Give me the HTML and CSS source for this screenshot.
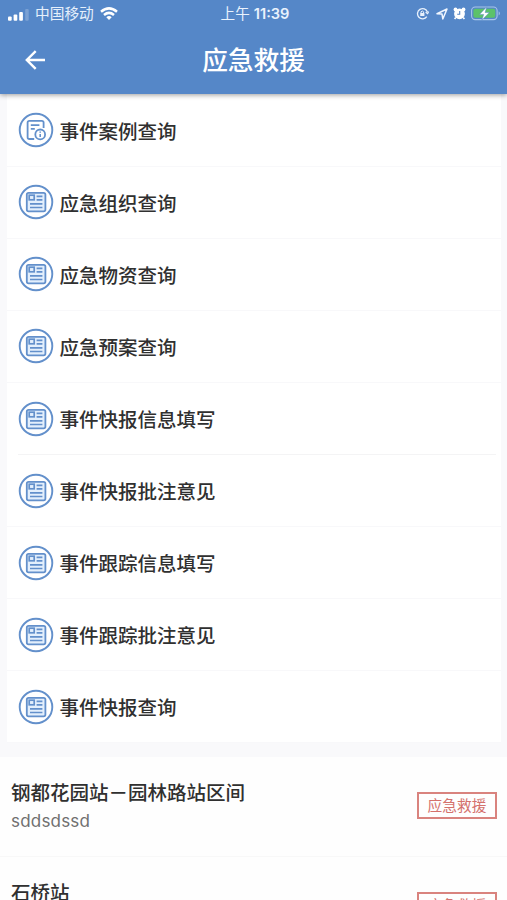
FILE: index.html
```html
<!DOCTYPE html>
<html lang="zh-CN">
<head>
<meta charset="utf-8">
<title>应急救援</title>
<link rel="stylesheet" href="styles.css">
</head>
<body>
<svg class="defs" aria-hidden="true">
  <symbol id="news" viewBox="0 0 36 36">
    <circle cx="18" cy="18" r="16.3" stroke-width="1.9"/>
    <rect x="8.8" y="8.8" width="18.6" height="18.6" rx="1.8" fill="#e3effc" stroke-width="1.8"/>
    <rect x="11.2" y="11.2" width="5" height="4.6" stroke-width="1.7"/>
    <path d="M18.6 12.4h5.8M18.6 15.9h5.8M12 19.8h12.4M12 23.5h12.4" stroke-width="1.7"/>
  </symbol>
  <symbol id="case" viewBox="0 0 36 36">
    <circle cx="18" cy="18" r="16.3" stroke-width="1.9"/>
    <path d="M25.6 16v-5.4q0-1.8-1.8-1.8H11.4q-1.8 0-1.8 1.8v14.6q0 1.8 1.8 1.8h4.8M12.8 13.2h8.6M12.8 16.8h4" stroke-width="1.8"/>
    <circle cx="22.2" cy="22.4" r="4.9" stroke-width="1.8"/>
    <path d="M22.2 22v3M22.2 19.6v1.2" stroke-width="1.6"/>
  </symbol>
</svg>
<header class="header">
  <div class="status">
    <div class="status-left">
      <svg class="signal" viewBox="0 0 22 12"><g fill="#fff"><rect x="0" y="7.5" width="3.7" height="4.2" rx="1"/><rect x="5.6" y="5.6" width="3.7" height="6.1" rx="1"/><rect x="11.2" y="3" width="3.7" height="8.7" rx="1"/><rect x="17.2" y="0" width="3.5" height="11.7" rx="1" opacity=".22"/></g></svg>
      <span class="carrier">中国移动</span>
      <svg class="wifi" viewBox="0 0 18 13" fill="none" stroke="#fff" stroke-width="2.5"><path d="M1 4.8Q9-2 17 4.8M4 8Q9 3.8 14 8"/><path d="M6.3 10.2Q9 8 11.7 10.2L9 13z" fill="#fff" stroke="none"/></svg>
    </div>
    <div class="clock">上午 <b>11:39</b></div>
    <div class="status-right">
      <svg class="lock" viewBox="0 0 13 13" fill="none" stroke="#e8f1fc" stroke-width="1.3"><path d="M10.8 9.6A5.1 5.1 0 1 1 11.4 5M9.6 5.2l2 1.3 1.1-2"/><rect x="4.2" y="6" width="4.2" height="3" fill="#e8f1fc" stroke="none"/><path d="M5 6V4.8q1.3-1.6 2.6 0V6" stroke-width="1"/></svg>
      <svg class="arrow" viewBox="0 0 12 12" fill="none" stroke="#f0f6ff" stroke-width="1.5" stroke-linejoin="round"><path d="M1 5.8L11 1 6.8 11 6 6z"/></svg>
      <svg class="alarm" viewBox="0 0 13 13"><circle cx="2.5" cy="2.5" r="1.9" fill="#fff"/><circle cx="10.5" cy="2.5" r="1.9" fill="#fff"/><circle cx="6.5" cy="6.8" r="5.4" fill="#fff"/><path d="M2.8 10.5L1.6 12M10.2 10.5l1.2 1.5" stroke="#fff" stroke-width="1.6"/><path d="M6.7 4v3.2H4.2" fill="none" stroke="#5686c8" stroke-width="1.1"/></svg>
      <svg class="battery" viewBox="0 0 31 15"><rect x=".6" y="1" width="25.5" height="12.6" rx="3.6" fill="none" stroke="#a9c5e8" stroke-width="1.1"/><rect x="2.4" y="2.8" width="21.9" height="9" rx="2" fill="#5cc26a"/><path d="M27.7 5.2q2.3 2.1 0 4.2z" fill="#a9c5e8"/><path d="M15.8.8L8.5 8.4h4.2l-1.9 5.8 7.5-7.7h-4.2z" fill="#fff" stroke="#5686c8" stroke-width=".5"/></svg>
    </div>
  </div>
  <div class="bar">
    <svg class="back" viewBox="0 0 20 20" fill="none" stroke="#fff" stroke-width="2.4"><path d="M20 10H2M10.7 1.1L1.8 10l8.9 8.9"/></svg>
    <h1>应急救援</h1>
  </div>
</header>
<main>
  <ul class="menu">
    <li><svg class="icon"><use href="#case"/></svg>事件案例查询</li>
    <li><svg class="icon"><use href="#news"/></svg>应急组织查询</li>
    <li><svg class="icon"><use href="#news"/></svg>应急物资查询</li>
    <li><svg class="icon"><use href="#news"/></svg>应急预案查询</li>
    <li class="inset"><svg class="icon"><use href="#news"/></svg>事件快报信息填写</li>
    <li><svg class="icon"><use href="#news"/></svg>事件快报批注意见</li>
    <li><svg class="icon"><use href="#news"/></svg>事件跟踪信息填写</li>
    <li><svg class="icon"><use href="#news"/></svg>事件跟踪批注意见</li>
    <li><svg class="icon"><use href="#news"/></svg>事件快报查询</li>
  </ul>
  <section class="events">
    <article class="event">
      <div><h2>钢都花园站－园林路站区间</h2><p>sddsdssd</p></div>
      <span class="tag">应急救援</span>
    </article>
    <article class="event">
      <div><h2>石桥站</h2></div>
      <span class="tag">应急救援</span>
    </article>
  </section>
</main>
</body>
</html>
```
FILE: styles.css
```css
* { box-sizing: border-box; margin: 0; padding: 0; }
html, body { height: 900px; overflow: hidden; }
body {
  display: flex;
  flex-direction: column;
  background: #f9f9fb;
  color: #303030;
  font-family: Inter, "Noto Sans CJK SC", sans-serif;
}
.defs { display: none; }
.header {
  flex: none;
  height: 94px;
  background: #5587c8;
  color: #fff;
  box-shadow: 0 1px 5px rgba(0, 0, 0, .4);
  z-index: 1;
}
.status {
  display: grid;
  grid-template-columns: 1fr auto 1fr;
  align-items: center;
  height: 27px;
  padding: 0 5px 0 8px;
}
.status-left, .status-right { display: flex; align-items: center; }
.status-right { justify-content: flex-end; }
.signal { width: 22px; height: 12px; margin-top: 2px; }
.carrier { margin-left: 5px; font-size: 14.7px; line-height: 20px; color: #e5effb; }
.wifi { width: 18px; height: 13px; margin-left: 6px; margin-top: -1px; }
.clock { font-size: 14.6px; line-height: 20px; color: #e9f2fd; }
.clock b { font-weight: 600; }
.lock { width: 13px; height: 13px; margin-right: 7px; }
.arrow { width: 12px; height: 12px; margin-right: 5px; }
.alarm { width: 13px; height: 13px; margin-right: 5px; }
.battery { width: 31px; height: 15px; }
.bar {
  display: grid;
  grid-template-columns: 60px 1fr 60px;
  align-items: center;
  height: 66px;
}
.back { width: 20px; height: 20px; margin-left: 25px; }
h1 { padding-top: 2px; font-size: 25.7px; line-height: 36px; font-weight: 500; text-align: center; }
.menu {
  margin: 0 6px 0 7px;
  padding-top: .6px;
  background: #fff;
  list-style: none;
}
.menu li {
  display: flex;
  align-items: center;
  height: 72.1px;
  padding-left: 11px;
  font-size: 19.5px;
  font-weight: 500;
  border-bottom: 1px solid #f8f8fa;
}
.menu .inset {
  margin: 0 5px 0 11px;
  padding-left: 0;
  border-bottom-color: #f4f4f5;
}
.icon {
  width: 36px;
  height: 36px;
  margin-right: 5.5px;
  fill: none;
  stroke: #6390cb;
}
.events { margin-top: 14px; background: #fefefe; }
.event {
  display: flex;
  justify-content: space-between;
  height: 100px;
  padding: 22px 10px 0 11px;
  border-bottom: 1px solid #f8f8f8;
}
h2 { font-size: 19.5px; line-height: 29px; font-weight: 500; }
p { font-size: 17px; line-height: 24px; color: #707070; margin-top: 1px; letter-spacing: .2px; }
.tag {
  width: 80px;
  height: 27px;
  margin-top: 13px;
  border: 2px solid #d9837e;
  color: #d4716c;
  font-size: 14.7px;
  line-height: 24px;
  text-align: center;
}
```
